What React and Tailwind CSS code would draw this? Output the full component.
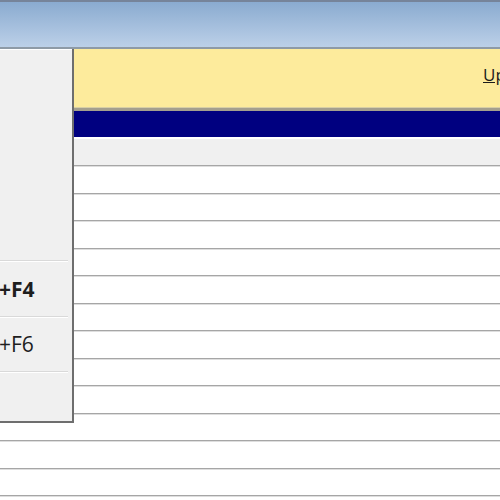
export default function App() {
  const rows = Array.from({ length: 12 });

  return (
    <div
      className="relative w-[500px] h-[500px] overflow-hidden bg-white"
      style={{ fontFamily: '"Open Sans", "Noto Sans", sans-serif' }}
    >
      {/* ===== TITLE BAR ===== */}
      <div className="h-[49px] border-t-2 border-b-2 border-t-[#76849a] border-b-[#8e9aa6] bg-gradient-to-b from-[#8aabd0] to-[#bcd0e8]" />

      {/* ===== YELLOW INFO BAR ===== */}
      <div className="relative h-[58px] bg-[#fdeb9c]">
        <span className="absolute left-[483px] top-[17px] text-[17px] leading-none text-[#1b1b1b] underline whitespace-nowrap">
          Update
        </span>
      </div>
      <div className="h-[4px] border-t border-[#d8cfa4] bg-[#a49f8e]" />

      {/* ===== GRID HEADER ===== */}
      <div className="h-[26px] bg-[#000080]" />
      <div className="h-[2px] bg-white" />
      <div className="h-[26px] bg-[#f0f0f0]" />
      <div className="h-px bg-[#a6a6a6]" />
      <div className="h-px bg-[#dedede]" />

      {/* ===== GRID ROWS ===== */}
      {rows.map((_, i) => (
        <div key={i} className="h-[27.5px] flex flex-col">
          <div className="flex-1 bg-white" />
          <div className="h-px bg-[#a6a6a6]" />
          <div className="h-px bg-[#dedede]" />
        </div>
      ))}

      {/* ===== DROPDOWN MENU ===== */}
      <div className="absolute left-0 top-[49px] w-[74px] h-[374px] bg-[#f0f0f0] border-r-2 border-b-2 border-[#6e6e6e] flex flex-col">
        <div className="border-t border-white h-[211px]" />
        <Separator />
        <div className="h-[54px] flex items-center">
          <span className="-ml-[1px] whitespace-nowrap text-[21px] font-bold text-[#1e1e1e] leading-none">
            +F4
          </span>
        </div>
        <Separator />
        <div className="h-[53px] flex items-center">
          <span className="-ml-[1px] whitespace-nowrap text-[21px] text-[#1e1e1e] leading-none">
            +F6
          </span>
        </div>
        <Separator />
        <div className="flex-1" />
      </div>
    </div>
  );
}

function Separator() {
  return (
    <div className="mr-[4px]">
      <div className="h-px bg-[#d9d9d9]" />
      <div className="h-px bg-white" />
    </div>
  );
}
